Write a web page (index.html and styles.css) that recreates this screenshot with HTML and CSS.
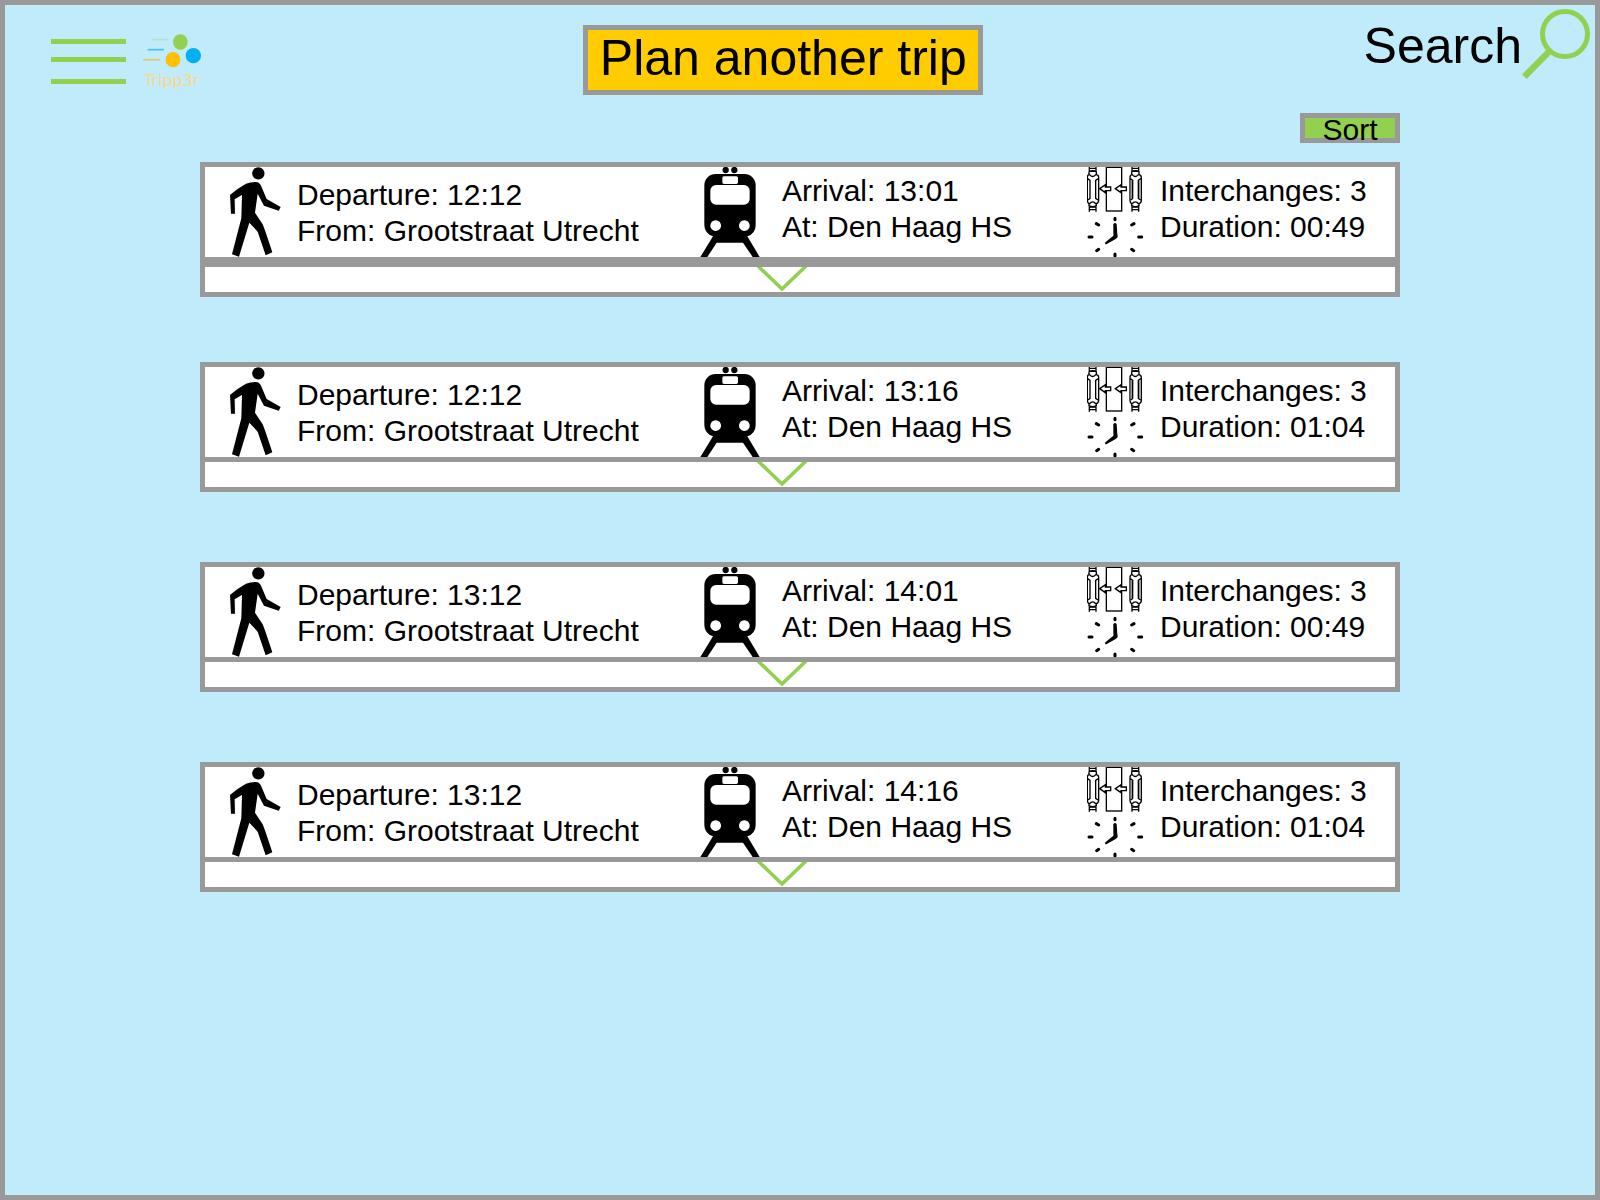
FILE: index.html
```html
<!DOCTYPE html>
<html lang="en">
<head>
<meta charset="utf-8">
<title>Tripp3r</title>
<link rel="stylesheet" href="styles.css">
</head>
<body>
<svg class="sprite" aria-hidden="true">
  <symbol id="walk" viewBox="120 36 156 270">
    <circle cx="205" cy="55" r="18.500"/>
    <path d="M123 176L120 120Q142 100 168 86Q184 80 198 81Q208 82 213 92L230 132L272 156L266 167L222 152L203 116L195 173L218 208Q224 222 247 292L227 301L203 230L178 203L147 305L126 298L154 190L156 120L134 133L135 176Z"/>
  </symbol>
  <symbol id="train" viewBox="30 36 180 270">
    <circle cx="107" cy="45" r="9.500"/><circle cx="133" cy="45" r="9.500"/>
    <path fill-rule="evenodd" d="M77 57H163A34 34 0 0 1 197 91V211A34 34 0 0 1 172 244L209 306H188L159 263H80L52 306H31L69 244A34 34 0 0 1 43 211V91A34 34 0 0 1 77 57ZM102 64A5 5 0 0 0 97 69V82A5 5 0 0 0 102 87H139A5 5 0 0 0 144 82V69A5 5 0 0 0 139 64ZM78 90A17 17 0 0 0 61 107V132A17 17 0 0 0 78 149H162A17 17 0 0 0 179 132V107A17 17 0 0 0 162 90ZM77 196a16 16 0 1 0 .1 0ZM163 196a16 16 0 1 0 .1 0Z"/>
  </symbol>
  <symbol id="change" viewBox="51 36 174 270">
    <g fill="none" stroke="#000" stroke-width="4">
      <rect x="109" y="37" width="46" height="131"/>
      <path d="M89 101L106 89V96H122V107H106V113ZM136 101L153 89V96H169V107H153V113Z" fill="#fff"/>
      <g id="coach">
        <path d="M58 36V50M78 36V50M56 40H80M58 49H78M58 154V170M78 154V170M56 156H80M56 164H80"/>
        <path d="M57 59V51Q68 43 79 51V59Q86 60 86 68V136Q86 144 79 146V152Q68 158 57 152V146Q52 143 52 136V68Q52 60 57 59Z"/>
        <path d="M58 58Q68 71 78 58M58 147Q68 134 78 147M53 71L60 76V130L54 135M85 71L77 76V130L84 135"/>
      </g>
      <use href="#coach" x="128"/>
      <path d="M184 76V130M209 76V130" stroke="#999"/>
    </g>
    <path d="M130 208Q135 200 140 208L142 238Q146 247 137 252L109 268Q103 269 106 262L130 242Z"/>
    <path d="M135 190V194M135 297V303M57 246H66M206 246H215M79 206L86 210M185 210L192 206M80 287L86 283M185 283L191 287" fill="none" stroke="#000" stroke-width="9" stroke-linecap="round"/>
  </symbol>
  <symbol id="chevron" viewBox="0 0 50 25">
    <path d="M0 -2L25 22L50 -2" fill="none" stroke="#92d050" stroke-width="3.500"/>
  </symbol>
</svg>

<div class="page">
  <header class="header">
    <div class="brand">
      <button class="menu" type="button" aria-label="Menu">
        <svg width="75" height="45" viewBox="0 0 75 45" fill="#92d050"><path d="M0 0H75V5H0ZM0 18H75V23H0ZM0 40H75V45H0Z"/></svg>
      </button>
      <a class="logo" href="#" aria-label="Tripp3r home">
        <svg width="60" height="56" viewBox="429 102 180 168">
          <path d="M455 119H504" stroke="#b2e2cb" stroke-width="5"/>
          <path d="M443 149H492" stroke="#3fc4f2" stroke-width="5"/>
          <path d="M429 179H480" stroke="#e8c95c" stroke-width="5"/>
          <ellipse cx="541" cy="126" rx="22" ry="23" fill="#92d050"/>
          <ellipse cx="580" cy="167" rx="23" ry="23" fill="#00b0f0"/>
          <ellipse cx="519" cy="179" rx="22" ry="23" fill="#ffc000"/>
          <text class="logo-name" x="432" y="258">Tripp3r</text>
        </svg>
      </a>
    </div>
    <button class="plan" type="button">Plan another trip</button>
    <button class="search" type="button"><span>Search</span>
      <svg width="68" height="70" viewBox="726 27 204 210" fill="none" stroke="#92d050" aria-hidden="true"><circle cx="855" cy="102" r="67.500" stroke-width="15"/><path d="M809 153L733 230" stroke-width="19"/></svg>
    </button>
  </header>

  <main class="results">
    <div class="toolbar"><button class="sort" type="button">Sort</button></div>
    <ul class="trips">
      <li class="trip trip-spaced">
        <div class="summary">
          <div class="leg departure"><svg class="walk"><use href="#walk"/></svg><p>Departure: 12:12<br>From: Grootstraat Utrecht</p></div>
          <div class="leg arrival"><svg class="train"><use href="#train"/></svg><p>Arrival: 13:01<br>At: Den Haag HS</p></div>
          <div class="leg totals"><svg class="change"><use href="#change"/></svg><p>Interchanges: 3<br>Duration: 00:49</p></div>
        </div>
        <button class="expand" type="button" aria-label="Show trip details"><svg class="chevron"><use href="#chevron"/></svg></button>
      </li>
      <li class="trip">
        <div class="summary">
          <div class="leg departure"><svg class="walk"><use href="#walk"/></svg><p>Departure: 12:12<br>From: Grootstraat Utrecht</p></div>
          <div class="leg arrival"><svg class="train"><use href="#train"/></svg><p>Arrival: 13:16<br>At: Den Haag HS</p></div>
          <div class="leg totals"><svg class="change"><use href="#change"/></svg><p>Interchanges: 3<br>Duration: 01:04</p></div>
        </div>
        <button class="expand" type="button" aria-label="Show trip details"><svg class="chevron"><use href="#chevron"/></svg></button>
      </li>
      <li class="trip">
        <div class="summary">
          <div class="leg departure"><svg class="walk"><use href="#walk"/></svg><p>Departure: 13:12<br>From: Grootstraat Utrecht</p></div>
          <div class="leg arrival"><svg class="train"><use href="#train"/></svg><p>Arrival: 14:01<br>At: Den Haag HS</p></div>
          <div class="leg totals"><svg class="change"><use href="#change"/></svg><p>Interchanges: 3<br>Duration: 00:49</p></div>
        </div>
        <button class="expand" type="button" aria-label="Show trip details"><svg class="chevron"><use href="#chevron"/></svg></button>
      </li>
      <li class="trip">
        <div class="summary">
          <div class="leg departure"><svg class="walk"><use href="#walk"/></svg><p>Departure: 13:12<br>From: Grootstraat Utrecht</p></div>
          <div class="leg arrival"><svg class="train"><use href="#train"/></svg><p>Arrival: 14:16<br>At: Den Haag HS</p></div>
          <div class="leg totals"><svg class="change"><use href="#change"/></svg><p>Interchanges: 3<br>Duration: 01:04</p></div>
        </div>
        <button class="expand" type="button" aria-label="Show trip details"><svg class="chevron"><use href="#chevron"/></svg></button>
      </li>
    </ul>
  </main>
</div>
</body>
</html>
```
FILE: styles.css
```css
* {
  box-sizing: border-box;
}

body {
  margin: 0;
  font-family: "Liberation Sans", Arial, sans-serif;
  color: #000;
}

button {
  margin: 0;
  padding: 0;
  border: 0;
  background: none;
  font: inherit;
  color: inherit;
  cursor: pointer;
}

svg {
  display: block;
  flex: none;
}

.sprite {
  position: absolute;
  width: 0;
  height: 0;
}

.page {
  min-height: 100vh;
  border: 5px solid #999;
  background: #c0ebfb;
}

.header {
  display: flex;
  justify-content: space-between;
  align-items: flex-end;
  min-height: 90px;
  padding: 4px 5px 0 46px;
}

.brand {
  display: flex;
  align-items: center;
  gap: 17px;
  height: 70px;
  padding-top: 3px;
}

.logo-name {
  font-family: "DejaVu Sans", sans-serif;
  font-size: 48px;
  fill: #f8d98a;
}

.plan {
  display: flex;
  justify-content: center;
  align-items: center;
  width: 400px;
  height: 70px;
  padding-bottom: 4px;
  border: 5px solid #999;
  background: #fc0;
  font-size: 50px;
  line-height: 50px;
}

.search {
  display: flex;
  align-items: center;
  align-self: flex-start;
  font-size: 50px;
  line-height: 50px;
}

.search span {
  padding-top: 3px;
}

.results {
  width: 75vw;
  margin: 18px auto 0;
}

.toolbar {
  display: flex;
  justify-content: flex-end;
}

.sort {
  display: flex;
  justify-content: center;
  align-items: center;
  width: 100px;
  height: 30px;
  padding-top: 4px;
  border: 5px solid #999;
  background: #92d050;
  font-size: 30px;
  line-height: 30px;
}

.trips {
  display: grid;
  grid-auto-rows: minmax(200px, auto);
  margin: 19px 0 0;
  padding: 0;
  list-style: none;
}

.summary {
  display: grid;
  grid-template-columns: 495fr 387fr 308fr;
  min-height: 100px;
  border: 5px solid #999;
  background: #fff;
}

.leg {
  display: flex;
  align-items: flex-start;
}

.leg p {
  margin: 0;
  padding-top: 6px;
  font-size: 30px;
  line-height: 36px;
  white-space: nowrap;
}

.departure {
  gap: 15px;
  padding-left: 25px;
}

.departure p {
  padding-top: 10px;
}

.arrival {
  gap: 22px;
}

.totals {
  gap: 15px;
}

.walk {
  width: 52px;
  height: 90px;
}

.train {
  width: 60px;
  height: 90px;
}

.change {
  width: 58px;
  height: 90px;
}

.expand {
  display: flex;
  justify-content: center;
  width: 100%;
  height: 35px;
  margin-top: -5px;
  padding-right: 36px;
  border: 5px solid #999;
  background: #fff;
}

.trip-spaced .expand {
  margin-top: 0;
}

.chevron {
  width: 50px;
  height: 25px;
}
```
